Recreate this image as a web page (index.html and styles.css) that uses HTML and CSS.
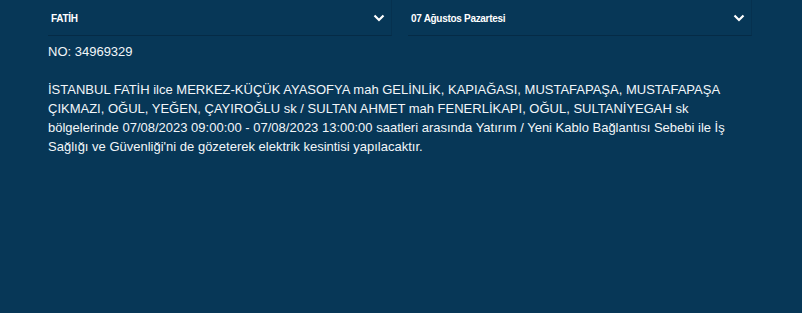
FILE: index.html
```html
<!DOCTYPE html>
<html lang="tr">
<head>
    <meta charset="UTF-8">
    <meta name="viewport" content="width=device-width, initial-scale=1.0">
    <title>Elektrik Kesintisi</title>
    <link rel="stylesheet" href="styles.css">
</head>
<body>
    <div class="outage">
        <div class="filters">
            <div class="select">
                <span>FATİH</span>
                <svg class="chevron" width="12" height="8" viewBox="0 0 12 8"><path d="M1.5 1.5 L6 6 L10.5 1.5" fill="none" stroke="#fff" stroke-width="2.2"/></svg>
            </div>
            <div class="select">
                <span>07 Ağustos Pazartesi</span>
                <svg class="chevron" width="12" height="8" viewBox="0 0 12 8"><path d="M1.5 1.5 L6 6 L10.5 1.5" fill="none" stroke="#fff" stroke-width="2.2"/></svg>
            </div>
        </div>
        <div class="result">
            NO: 34969329<br><br>
            İSTANBUL FATİH ilce MERKEZ-KÜÇÜK AYASOFYA mah GELİNLİK, KAPIAĞASI, MUSTAFAPAŞA, MUSTAFAPAŞA ÇIKMAZI, OĞUL, YEĞEN, ÇAYIROĞLU sk / SULTAN AHMET mah FENERLİKAPI, OĞUL, SULTANİYEGAH sk bölgelerinde 07/08/2023 09:00:00 - 07/08/2023 13:00:00 saatleri arasında Yatırım / Yeni Kablo Bağlantısı Sebebi ile İş Sağlığı ve Güvenliği'ni de gözeterek elektrik kesintisi yapılacaktır.
        </div>
    </div>
</body>
</html>
```

FILE: styles.css
```css
body {
    margin: 0;
    background-color: #073757;
    font-family: "Liberation Sans", Arial, sans-serif;
    color: #f2f6f9;
}

.outage {
    width: 704px;
    padding: 0 48px;
}

.filters {
    display: flex;
    gap: 16px;
}

.select {
    flex: 1;
    height: 35px;
    display: flex;
    justify-content: space-between;
    align-items: center;
    padding: 0 6px 0 3px;
    border-bottom: 1px solid #052b46;
    border-right: 1px solid #06314f;
    font-size: 10px;
    font-weight: bold;
    letter-spacing: -0.3px;
    color: #fff;
}

.select span {
    padding-top: 1px;
}

.chevron {
    display: block;
}

.result {
    padding-top: 6px;
    font-size: 13px;
    line-height: 19px;
}
```
